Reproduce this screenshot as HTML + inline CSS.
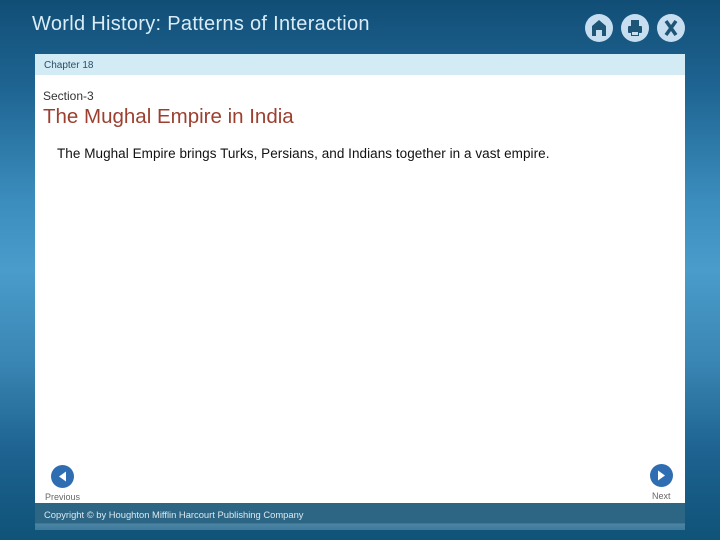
<!DOCTYPE html>
<html><head><meta charset="utf-8"><style>
*{margin:0;padding:0;box-sizing:border-box}
body{width:720px;height:540px;overflow:hidden;position:relative;font-family:"Liberation Sans",sans-serif;
background:linear-gradient(to bottom,#114e76 0px,#1f6593 90px,#3b8dbd 200px,#4a9ccb 270px,#3a86b4 360px,#1e6391 450px,#0f5378 540px);}
.t{position:absolute;left:32px;top:13px;font-size:20px;color:#d9ecf7;letter-spacing:0.3px}
.ic{position:absolute;top:14px;width:28px;height:28px;border-radius:50%;background:#c7def0}
.panel{position:absolute;left:35px;top:54px;width:650px;height:449px;background:#fff}
.ch{position:absolute;left:35px;top:54px;width:650px;height:21px;background:#d2ebf5;font-size:10px;color:#2a4f66;padding:6px 0 0 9px}
.sec{position:absolute;left:43px;top:89px;font-size:12px;color:#333}
.h{position:absolute;left:43px;top:105px;font-size:20.5px;color:#9c3f2f}
.p{position:absolute;left:57px;top:146px;font-size:13.5px;color:#111;letter-spacing:0.05px}
.nav{position:absolute;top:465px;width:23px;height:23px;border-radius:50%;background:#2f6db3}
.lbl{position:absolute;font-size:9px;color:#666}
.foot{position:absolute;left:35px;top:503px;width:650px;height:27px;background:linear-gradient(#2c6684 0,#2c6684 73%,#4b84a4 78%,#3f7a9a 100%);font-size:9.4px;color:#dbe9f2;padding:6px 0 0 9px}
</style></head><body>
<div class="t">World History: Patterns of Interaction</div>
<div class="ic" style="left:585px"><svg width="28" height="28"><path d="M14 6 L21 12 L21 22 L17 22 L17 16 L11 16 L11 22 L7 22 L7 12 Z" fill="#1d5577"/></svg></div>
<div class="ic" style="left:621px"><svg width="28" height="28"><rect x="10" y="6" width="8" height="6" fill="#1d5577"/><rect x="7" y="12" width="14" height="7" rx="1" fill="#1d5577"/><rect x="10" y="17" width="8" height="5" fill="#1d5577"/><rect x="11" y="18" width="6" height="3" fill="#c7def0"/></svg></div>
<div class="ic" style="left:657px"><svg width="28" height="28"><path d="M9 7 L19 21 M19 7 L9 21" stroke="#1d5577" stroke-width="3.5"/></svg></div>
<div class="panel"></div>
<div class="ch">Chapter 18</div>
<div class="sec">Section-3</div>
<div class="h">The Mughal Empire in India</div>
<div class="p">The Mughal Empire brings Turks, Persians, and Indians together in a vast empire.</div>
<div class="nav" style="left:51px"><svg width="23" height="23"><path d="M8 11.5 L15 6.5 L15 16.5Z" fill="#fff"/></svg></div>
<div class="nav" style="left:650px;top:464px"><svg width="23" height="23"><path d="M15 11.5 L8 6.5 L8 16.5Z" fill="#fff"/></svg></div>
<div class="lbl" style="left:45px;top:492px">Previous</div>
<div class="lbl" style="left:652px;top:491px">Next</div>
<div class="foot">Copyright © by Houghton Mifflin Harcourt Publishing Company</div>
</body></html>
